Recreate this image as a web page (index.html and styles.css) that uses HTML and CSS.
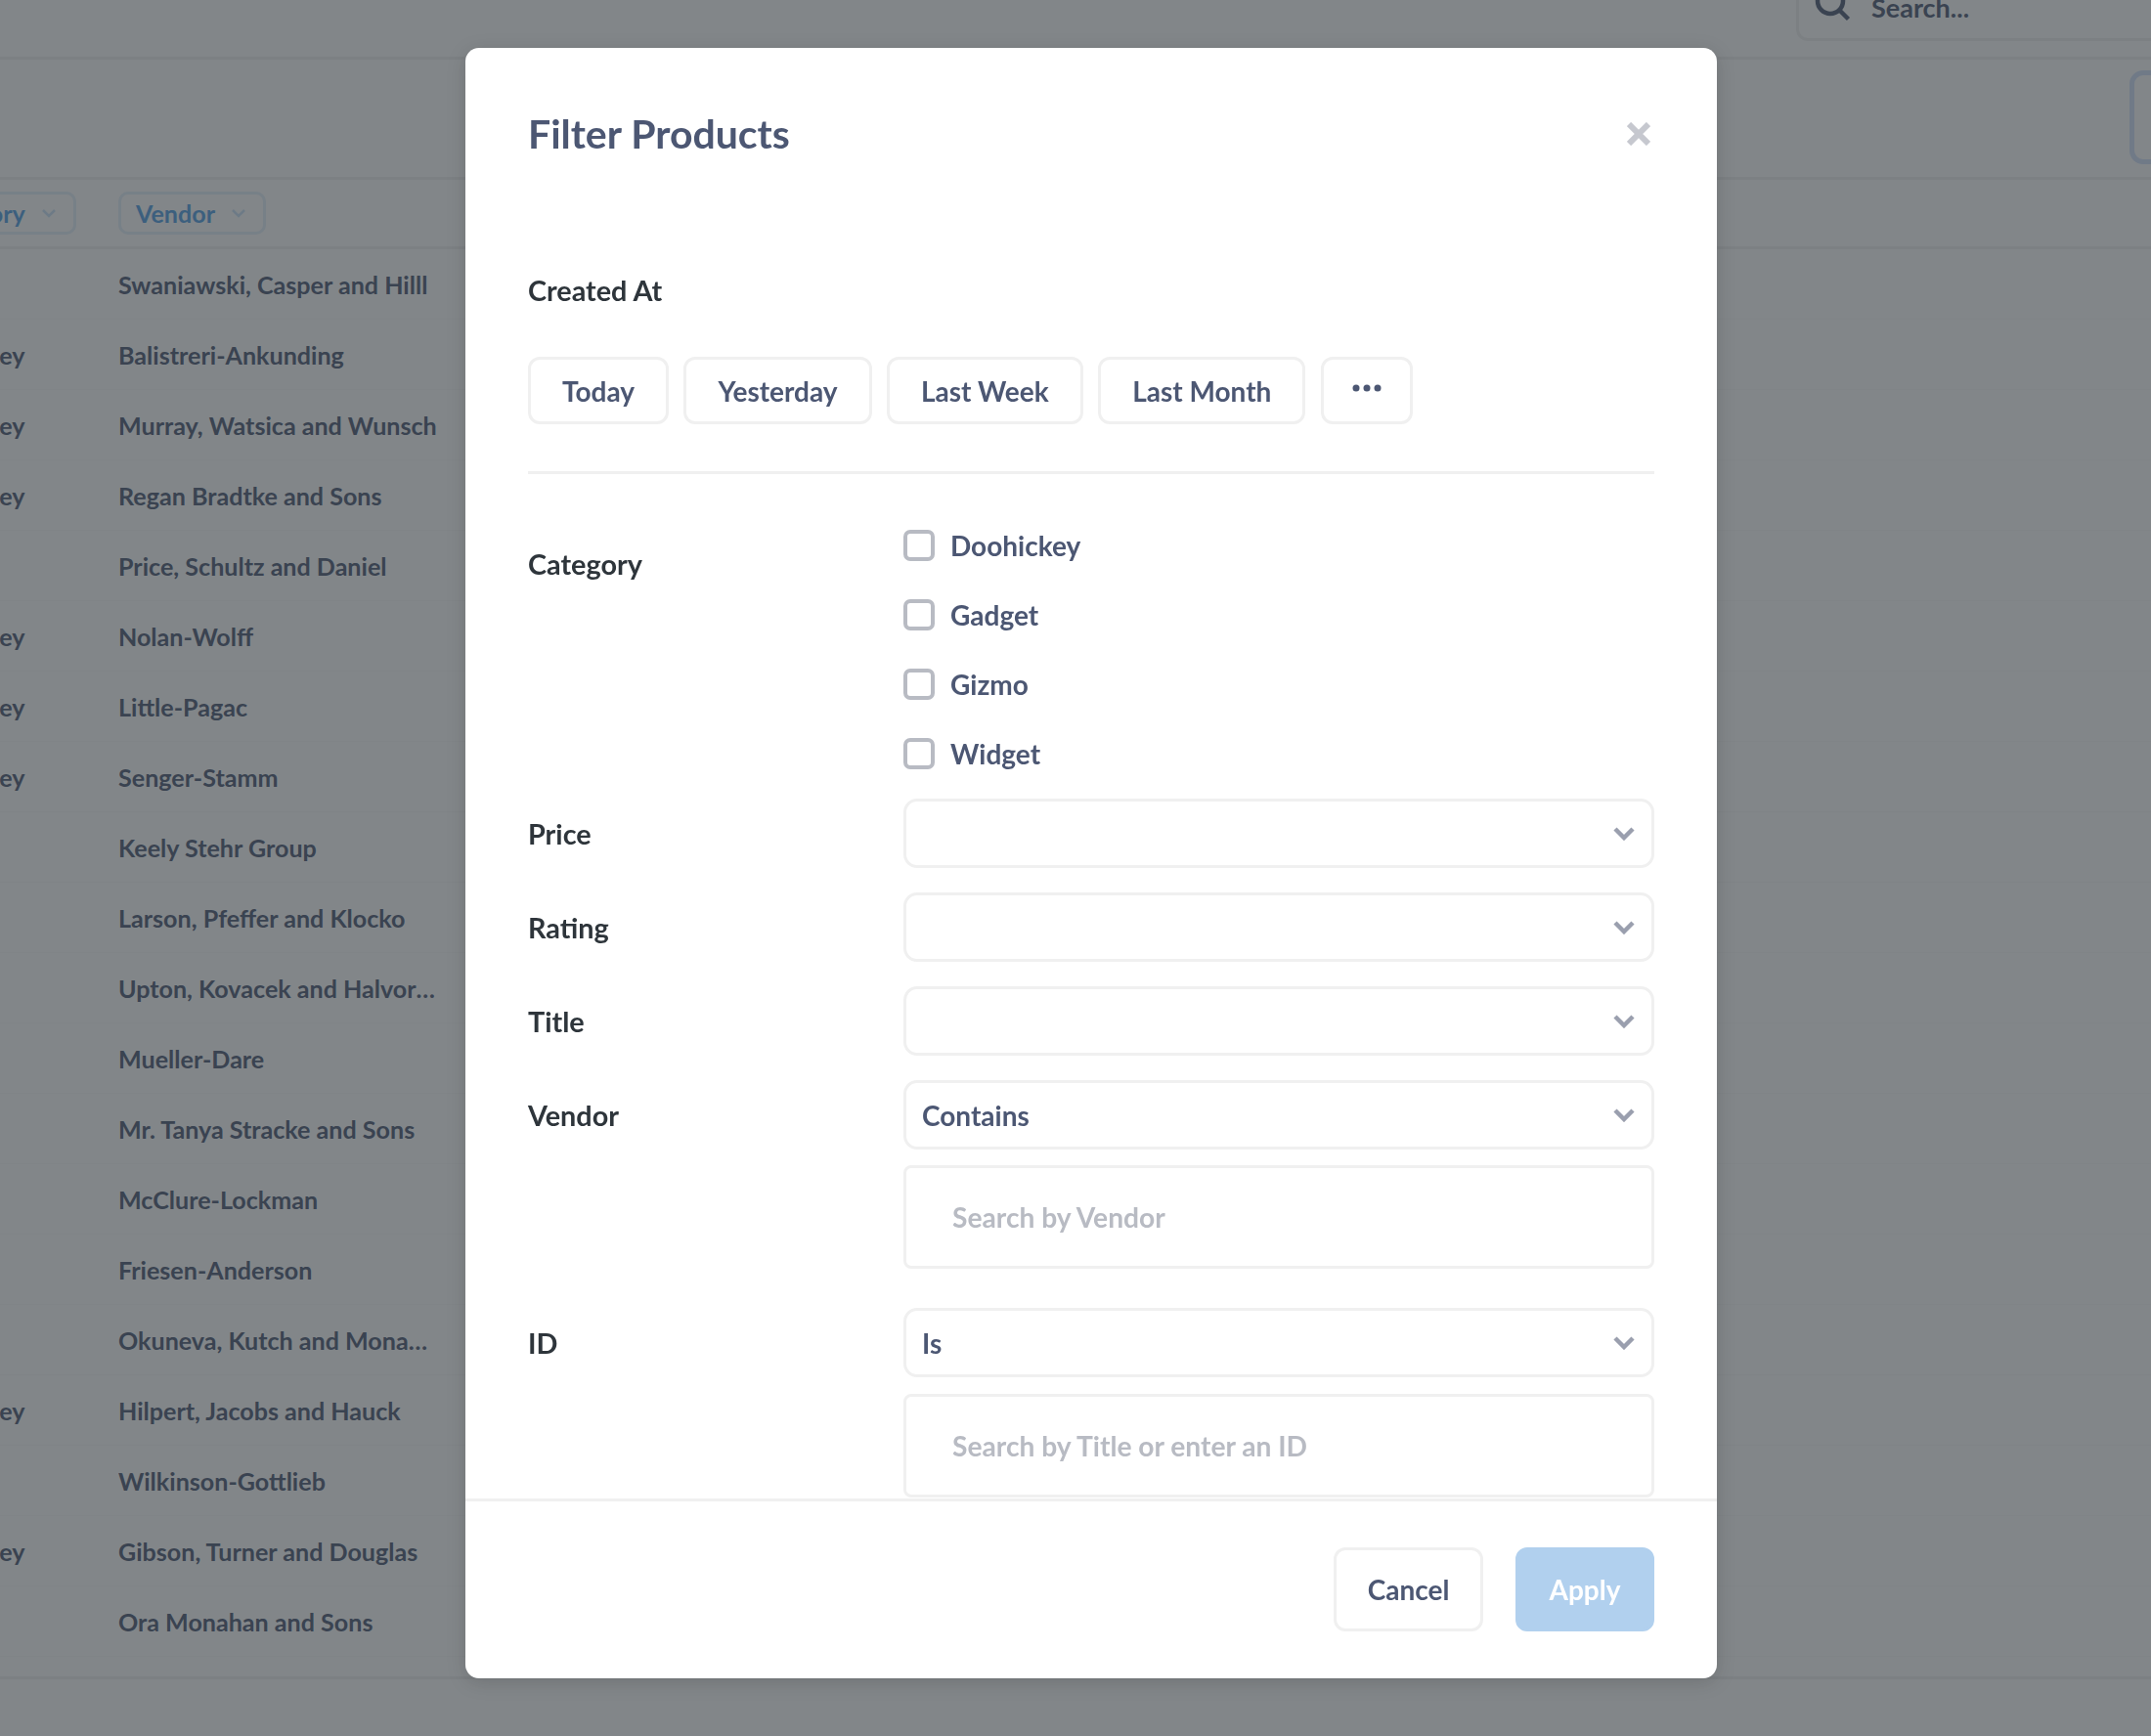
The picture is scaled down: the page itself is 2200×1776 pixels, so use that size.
FILE: index.html
```html
<!DOCTYPE html>
<html lang="en">
<head>
    <meta charset="UTF-8">
    <title>Filter Products</title>
    <link rel="stylesheet" href="styles.css">
</head>
<body>
    <div class="page">
        <header class="topbar">
            <div class="search">
                <svg class="search-icon" width="38" height="38" viewBox="0 0 38 38"><circle cx="16" cy="15" r="13" fill="none" stroke="#4c5773" stroke-width="4.5"/><path d="M25.500 24.500l9 9" stroke="#4c5773" stroke-width="4.500"/></svg>
                <span>Search...</span>
            </div>
        </header>
        <div class="toolbar"><div class="big-button"></div></div>
        <div class="table">
            <div class="row head">
                <div class="cell-cat"><span class="pill">Category <svg width="14" height="10" viewBox="0 0 14 10"><path d="M1 2l6 6 6-6" fill="none" stroke="#509ee3" stroke-opacity=".3" stroke-width="2.5"/></svg></span></div>
                <div class="cell-vendor"><span class="pill">Vendor <svg width="14" height="10" viewBox="0 0 14 10"><path d="M1 2l6 6 6-6" fill="none" stroke="#509ee3" stroke-opacity=".3" stroke-width="2.5"/></svg></span></div>
            </div>
            <div class="row"><div class="cell-cat">Gizmo</div><div class="cell-vendor">Swaniawski, Casper and Hilll</div></div>
            <div class="row"><div class="cell-cat">Doohickey</div><div class="cell-vendor">Balistreri-Ankunding</div></div>
            <div class="row"><div class="cell-cat">Doohickey</div><div class="cell-vendor">Murray, Watsica and Wunsch</div></div>
            <div class="row"><div class="cell-cat">Doohickey</div><div class="cell-vendor">Regan Bradtke and Sons</div></div>
            <div class="row"><div class="cell-cat">Gadget</div><div class="cell-vendor">Price, Schultz and Daniel</div></div>
            <div class="row"><div class="cell-cat">Doohickey</div><div class="cell-vendor">Nolan-Wolff</div></div>
            <div class="row"><div class="cell-cat">Doohickey</div><div class="cell-vendor">Little-Pagac</div></div>
            <div class="row"><div class="cell-cat">Doohickey</div><div class="cell-vendor">Senger-Stamm</div></div>
            <div class="row"><div class="cell-cat">Widget</div><div class="cell-vendor">Keely Stehr Group</div></div>
            <div class="row"><div class="cell-cat">Gizmo</div><div class="cell-vendor">Larson, Pfeffer and Klocko</div></div>
            <div class="row"><div class="cell-cat">Gadget</div><div class="cell-vendor">Upton, Kovacek and Halvorson</div></div>
            <div class="row"><div class="cell-cat">Widget</div><div class="cell-vendor">Mueller-Dare</div></div>
            <div class="row"><div class="cell-cat">Gizmo</div><div class="cell-vendor">Mr. Tanya Stracke and Sons</div></div>
            <div class="row"><div class="cell-cat">Gadget</div><div class="cell-vendor">McClure-Lockman</div></div>
            <div class="row"><div class="cell-cat">Widget</div><div class="cell-vendor">Friesen-Anderson</div></div>
            <div class="row"><div class="cell-cat">Gizmo</div><div class="cell-vendor">Okuneva, Kutch and Monahan</div></div>
            <div class="row"><div class="cell-cat">Doohickey</div><div class="cell-vendor">Hilpert, Jacobs and Hauck</div></div>
            <div class="row"><div class="cell-cat">Widget</div><div class="cell-vendor">Wilkinson-Gottlieb</div></div>
            <div class="row"><div class="cell-cat">Doohickey</div><div class="cell-vendor">Gibson, Turner and Douglas</div></div>
            <div class="row"><div class="cell-cat">Gadget</div><div class="cell-vendor">Ora Monahan and Sons</div></div>
        </div>
        <div class="table-foot"></div>
    </div>

    <div class="overlay"></div>

    <div class="modal">
        <div class="modal-head">
            <h2>Filter Products</h2>
            <svg class="close" width="24" height="24" viewBox="0 0 24 24"><path d="M2 2l20 20M22 2L2 22" stroke="#c6c8cf" stroke-width="6"/></svg>
        </div>

        <div class="modal-body">
            <section class="dates">
                <div class="label">Created At</div>
                <div class="shortcuts">
                    <button class="btn">Today</button>
                    <button class="btn">Yesterday</button>
                    <button class="btn">Last Week</button>
                    <button class="btn">Last Month</button>
                    <button class="btn more"><svg width="30" height="8" viewBox="0 0 30 8"><circle cx="4" cy="4" r="3.5"/><circle cx="15" cy="4" r="3.5"/><circle cx="26" cy="4" r="3.5"/></svg></button>
                </div>
            </section>

            <section class="field checks-field">
                <div class="label">Category</div>
                <div class="checks">
                    <div class="check"><span class="box"></span>Doohickey</div>
                    <div class="check"><span class="box"></span>Gadget</div>
                    <div class="check"><span class="box"></span>Gizmo</div>
                    <div class="check"><span class="box"></span>Widget</div>
                </div>
            </section>

            <section class="field">
                <div class="label">Price</div>
                <div class="control"><div class="select"><span></span><svg width="22" height="14" viewBox="0 0 22 14"><path d="M2 2l9 9 9-9" fill="none" stroke="#9a9fae" stroke-width="4.5"/></svg></div></div>
            </section>
            <section class="field">
                <div class="label">Rating</div>
                <div class="control"><div class="select"><span></span><svg width="22" height="14" viewBox="0 0 22 14"><path d="M2 2l9 9 9-9" fill="none" stroke="#9a9fae" stroke-width="4.5"/></svg></div></div>
            </section>
            <section class="field">
                <div class="label">Title</div>
                <div class="control"><div class="select"><span></span><svg width="22" height="14" viewBox="0 0 22 14"><path d="M2 2l9 9 9-9" fill="none" stroke="#9a9fae" stroke-width="4.5"/></svg></div></div>
            </section>
            <section class="field">
                <div class="label">Vendor</div>
                <div class="control">
                    <div class="select"><span>Contains</span><svg width="22" height="14" viewBox="0 0 22 14"><path d="M2 2l9 9 9-9" fill="none" stroke="#9a9fae" stroke-width="4.5"/></svg></div>
                    <input class="search-input" type="text" placeholder="Search by Vendor">
                </div>
            </section>
            <section class="field id-field">
                <div class="label">ID</div>
                <div class="control">
                    <div class="select"><span>Is</span><svg width="22" height="14" viewBox="0 0 22 14"><path d="M2 2l9 9 9-9" fill="none" stroke="#9a9fae" stroke-width="4.5"/></svg></div>
                    <input class="search-input" type="text" placeholder="Search by Title or enter an ID">
                </div>
            </section>
        </div>

        <div class="modal-foot">
            <button class="btn action">Cancel</button>
            <button class="btn action apply">Apply</button>
        </div>
    </div>
</body>
</html>
```

FILE: styles.css
```css
* {
    box-sizing: border-box;
}
html, body {
    margin: 0;
    padding: 0;
    height: 100%;
    overflow: hidden;
}
body {
    font-family: Lato, "Open Sans", sans-serif;
    font-weight: 700;
    font-size: 28px;
    color: #4c5773;
    background-color: #fff;
}

/* page behind the modal */
.page {
    height: 1776px;
    overflow: hidden;
}
.topbar {
    height: 61px;
    display: flex;
    justify-content: flex-end;
    align-items: flex-end;
    padding-bottom: 16px;
    border-bottom: 3px solid #f0f0f0;
}
.search {
    flex: none;
    width: 420px;
    height: 70px;
    margin-right: -57px;
    padding: 0 16px 15px;
    display: flex;
    align-items: flex-end;
    gap: 20px;
    font-size: 27px;
    border: 3px solid #f0f0f0;
    border-radius: 12px;
}
.toolbar {
    height: 123px;
    display: flex;
    justify-content: flex-end;
    padding-top: 11px;
    border-bottom: 3px solid #f0f0f0;
    overflow: hidden;
}
.big-button {
    flex: none;
    width: 60px;
    height: 96px;
    margin-right: -38px;
    border: 5px solid #d3e1fb;
    border-radius: 14px;
}
.table {
    margin-left: -94px;
}
.row {
    display: flex;
    align-items: center;
    height: 72px;
    font-size: 25.1px;
    white-space: nowrap;
    border-bottom: 1px solid #f9f9f9;
}
.row.head {
    height: 71px;
    border-bottom: 3px solid #f0f0f0;
    color: #509ee3;
}
.cell-cat {
    flex: none;
    width: 215px;
}
.cell-vendor {
    flex: none;
    width: 327px;
    overflow: hidden;
    text-overflow: ellipsis;
}
.pill {
    display: inline-flex;
    align-items: center;
    gap: 17px;
    height: 44px;
    padding: 0 18px 0 15px;
    border: 3px solid #e4effa;
    border-radius: 10px;
}
.table-foot {
    margin-top: 20px;
    border-top: 3px solid #f0f0f0;
}
.overlay {
    position: fixed;
    top: 0;
    left: 0;
    right: 0;
    bottom: 0;
    background-color: rgba(46, 53, 59, 0.6);
}

/* modal */
.modal {
    position: fixed;
    top: 49px;
    left: 476px;
    width: 1280px;
    height: 1668px;
    display: flex;
    flex-direction: column;
    background-color: #fff;
    border-radius: 14px;
    box-shadow: 0 4px 20px rgba(0, 0, 0, 0.15);
}
.modal-head {
    flex: none;
    height: 175px;
    padding: 0 68px 0 64px;
    display: flex;
    justify-content: space-between;
    align-items: center;
}
h2 {
    margin: 0;
    font-size: 41px;
    font-weight: 700;
}
.modal-body {
    flex: 1;
    min-height: 0;
    overflow: hidden;
    padding: 1px 64px 0;
}
.label {
    font-size: 28.8px;
    color: #2e353b;
    line-height: 34px;
}
.dates {
    padding: 55px 0 48px;
    border-bottom: 3px solid #f0f0f0;
}
.shortcuts {
    display: flex;
    gap: 15.5px;
    margin-top: 51px;
}
.btn {
    height: 69px;
    padding: 0 32px;
    font-family: inherit;
    font-weight: 700;
    font-size: 28px;
    color: #4c5773;
    background-color: #fff;
    border: 3px solid #f0f0f0;
    border-radius: 12px;
}
.btn.more {
    width: 94px;
    padding: 0 0 6px;
}
.more svg {
    display: block;
    margin: auto;
    fill: #4c5773;
}
.field {
    display: flex;
    margin-bottom: 25px;
}
.field > .label {
    flex: none;
    width: 384px;
    padding-top: 19px;
}
.checks-field {
    margin: 57px 0 30px;
}
.checks-field > .label {
    padding-top: 18px;
}
.checks {
    display: flex;
    flex-direction: column;
    gap: 39px;
}
.check {
    display: flex;
    align-items: center;
    gap: 16px;
    height: 32px;
}
.box {
    width: 32px;
    height: 32px;
    border: 4px solid #b8bbc3;
    border-radius: 7px;
}
.control {
    flex: 1;
    display: flex;
    flex-direction: column;
    gap: 16px;
}
.select {
    height: 71px;
    padding: 0 17px 0 16px;
    display: flex;
    justify-content: space-between;
    align-items: center;
    border: 3px solid #f0f0f0;
    border-radius: 14px;
}
.search-input {
    height: 106px;
    padding: 0 47px;
    font-family: inherit;
    font-weight: 700;
    font-size: 28.2px;
    color: #4c5773;
    border: 3px solid #f0f0f0;
    border-radius: 8px;
    outline: none;
}
.search-input::placeholder {
    color: #b8bbc3;
}
.id-field {
    margin-top: 40px;
    margin-bottom: 0;
}
.id-field .control {
    gap: 17px;
}
.modal-foot {
    flex: none;
    height: 184px;
    padding: 47px 64px 0;
    display: flex;
    justify-content: flex-end;
    gap: 33px;
    border-top: 3px solid #f0f0f0;
}
.btn.action {
    height: 86px;
    padding: 0 31.5px;
}
.btn.apply {
    color: #fff;
    background-color: #b1d0ee;
    border-color: #b1d0ee;
}
```
